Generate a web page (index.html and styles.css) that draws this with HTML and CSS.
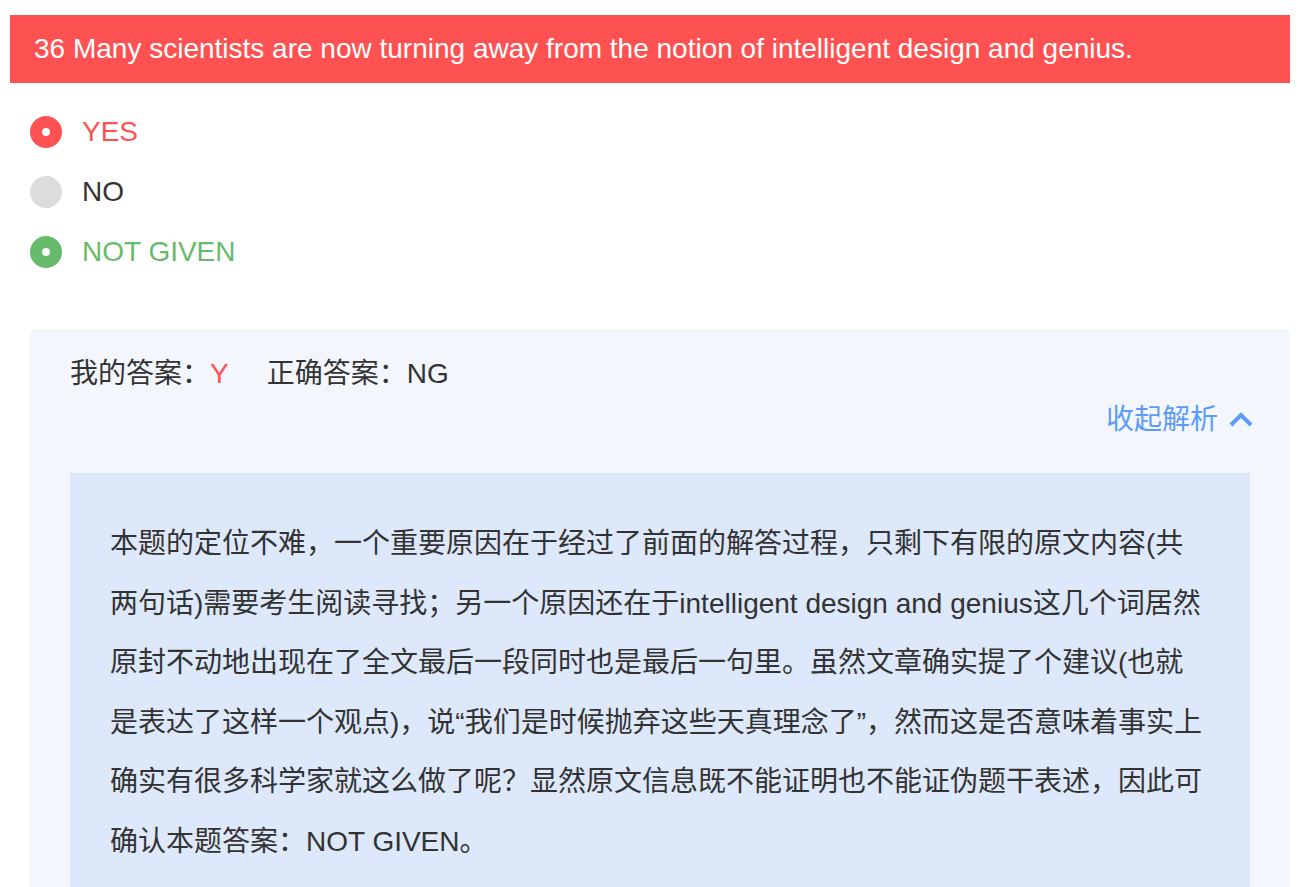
FILE: index.html
```html
<!DOCTYPE html>
<html lang="zh-CN">
<head>
<meta charset="utf-8">
<title>Question 36</title>
<link rel="stylesheet" href="styles.css">
</head>
<body>
<div class="page">
  <div class="question">36 Many scientists are now turning away from the notion of intelligent design and genius.</div>
  <ul class="options">
    <li class="option wrong"><span class="radio"></span><span class="label">YES</span></li>
    <li class="option"><span class="radio"></span><span class="label">NO</span></li>
    <li class="option right"><span class="radio"></span><span class="label">NOT GIVEN</span></li>
  </ul>
  <section class="analysis">
    <div class="answers">
      <span class="answer">我的答案：<span class="mine">Y</span></span>
      <span class="answer">正确答案：NG</span>
    </div>
    <div class="toggle-row">
      <span class="toggle">收起解析
        <svg class="chev" width="26" height="16" viewBox="0 0 26 16"><polyline points="3,13 13,3 23,13" fill="none" stroke="currentColor" stroke-width="4" stroke-linejoin="miter"/></svg>
      </span>
    </div>
    <div class="explain">本题的定位不难，一个重要原因在于经过了前面的解答过程，只剩下有限的原文内容(共两句话)需要考生阅读寻找；另一个原因还在于intelligent design and genius这几个词居然原封不动地出现在了全文最后一段同时也是最后一句里。虽然文章确实提了个建议(也就是表达了这样一个观点)，说“我们是时候抛弃这些天真理念了”，然而这是否意味着事实上确实有很多科学家就这么做了呢？显然原文信息既不能证明也不能证伪题干表述，因此可确认本题答案：NOT GIVEN。</div>
  </section>
</div>
</body>
</html>
```

FILE: styles.css
```css
* { box-sizing: border-box; }
html, body { margin: 0; padding: 0; background: #fff; }
body {
  font-family: "Liberation Sans", Arial, "Noto Sans CJK SC", sans-serif;
  font-size: 28px;
  color: #333;
}
.page {
  padding: 15px 11px 0 10px;
}
.question {
  background: #fe5252;
  color: #fff;
  height: 68px;
  line-height: 68px;
  padding-left: 24px;
}
.options {
  list-style: none;
  margin: 0;
  padding: 33px 0 0 20px;
}
.option {
  display: flex;
  align-items: center;
  height: 32px;
  line-height: 32px;
  margin-bottom: 28px;
}
.option:last-child { margin-bottom: 0; }
.radio {
  width: 32px;
  height: 32px;
  border-radius: 50%;
  background: #dcdcdc;
  margin-right: 20px;
  position: relative;
  flex: none;
}
.wrong .radio { background: #fe5252; }
.right .radio { background: #66bb6a; }
.wrong .radio::after, .right .radio::after {
  content: "";
  position: absolute;
  left: 12px;
  top: 12px;
  width: 8px;
  height: 8px;
  border-radius: 50%;
  background: #fff;
}
.wrong .label { color: #fe5252; }
.right .label { color: #66bb6a; }
.analysis {
  margin: 61px 0 0 20px;
  background: #f3f6fd;
  border-radius: 4px;
  padding: 27px 40px 40px 40px;
  min-height: 600px;
}
.answers {
  display: flex;
  gap: 38px;
  height: 36px;
  line-height: 36px;
}
.mine { color: #fe5252; }
.toggle-row {
  display: flex;
  justify-content: flex-end;
  margin-right: -4px;
  margin-top: 10px;
  height: 36px;
  line-height: 36px;
}
.toggle {
  color: #5c9cf8;
  display: flex;
  align-items: center;
  gap: 10px;
}
.chev { display: block; }
.explain {
  margin-top: 35px;
  background: #dde8fa;
  padding: 41px 40px 40px 40px;
  line-height: 59.5px;
}
```
